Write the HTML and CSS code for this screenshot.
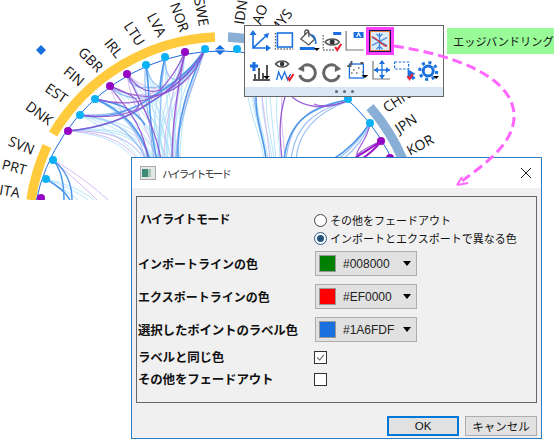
FILE: index.html
```html
<!DOCTYPE html>
<html lang="ja">
<head>
<meta charset="utf-8">
<title>ハイライトモード</title>
<link rel="stylesheet" href="styles.css">
</head>
<body>
<div class="canvas">
  <svg class="chart" width="558" height="200" viewBox="0 0 558 200">
    <g class="arc">
      <path class="arc-yellow" d="M215 37A200 200 0 0 0 53 134"/>
      <path class="arc-yellow" d="M47 146A200 200 0 0 0 31 200"/>
      <path class="arc-steel" d="M228 37A200 200 0 0 1 358 94"/>
      <path class="arc-steel" d="M370 107A200 200 0 0 1 403 160"/>
    </g>
    <circle class="ring" cx="221" cy="240" r="189"/>
    <g class="e1">
      <path d="M68 131C105 130 130 135 143 160"/><path d="M68 131C100 134 122 142 134 160"/>
      <path d="M68 131C108 128 134 132 148 160"/><path d="M68 131C110 126 138 130 153 160"/>
      <path d="M80 115C110 125 135 135 150 160"/><path d="M80 115C108 130 128 142 140 160"/>
      <path d="M80 115C112 122 140 130 155 160"/><path d="M80 115C115 120 145 128 160 160"/>
      <path d="M95 99C118 112 140 130 152 160"/><path d="M95 99C125 115 146 130 158 160"/>
      <path d="M95 99C128 110 150 128 163 160"/><path d="M95 99C132 106 155 128 168 160"/>
      <path d="M110 86C130 104 152 125 160 160"/><path d="M110 86C135 100 158 125 166 160"/>
      <path d="M110 86C140 98 163 125 172 160"/><path d="M127 74C142 100 160 125 165 160"/>
      <path d="M127 74C148 98 166 125 171 160"/><path d="M127 74C152 95 172 125 176 160"/>
      <path d="M146 65C149 95 158 125 160 160"/><path d="M146 65C152 95 165 125 168 160"/>
      <path d="M146 65C156 95 170 125 174 160"/><path d="M146 65C148 95 152 125 152 160"/>
      <path d="M165 57C160 90 158 125 163 160"/><path d="M165 57C165 90 170 125 172 160"/>
      <path d="M165 57C157 90 152 125 156 160"/><path d="M165 57C168 90 175 125 177 160"/>
      <path d="M185 52C172 85 166 125 168 160"/><path d="M185 52C178 85 174 125 175 160"/>
      <path d="M185 52C168 85 158 125 160 160"/><path d="M185 52C182 85 178 125 179 160"/>
      <path d="M205 49C185 80 172 120 173 160"/><path d="M205 49C190 82 180 120 180 160"/>
      <path d="M205 49C180 80 165 120 166 160"/><path d="M205 49C176 82 160 120 158 160"/>
      <path d="M248 97C252 120 262 140 264 160"/><path d="M252 97C255 120 264 140 266 160"/>
      <path d="M256 97C258 120 266 140 268 160"/><path d="M262 97C262 120 270 140 272 160"/>
      <path d="M266 97C266 120 272 140 274 160"/>
      <path d="M270 97C272 120 274 140 276 160"/><path d="M277 97C275 120 280 140 280 160"/>
      <path d="M46 179C60 184 78 192 88 200"/><path d="M46 179C58 186 68 192 78 200"/>
      <path d="M46 179C62 182 82 190 94 200"/>
    </g>
    <g class="e1p">
      <path d="M53 160C70 175 85 188 97 200"/><path d="M53 160C75 172 95 188 108 200"/>
      <path d="M68 131C100 132 124 140 138 160"/><path d="M68 131C103 130 130 136 146 160"/>
      <path d="M110 86C118 115 140 130 145 160"/><path d="M127 74C130 105 150 130 156 160"/>
      <path d="M185 52C180 85 172 125 173 160"/><path d="M185 52C174 85 164 125 164 160"/>
      <path d="M127 74C150 95 172 92 190 78"/><path d="M110 86C140 105 170 90 195 70"/>
      <path d="M205 49C195 85 175 115 176 160"/>
      <path d="M262 97C265 120 268 140 270 160"/><path d="M282 97C280 120 284 140 285 160"/>
      <path d="M330 104C338 106 342 104 347 101"/>
    </g>
    <g class="e2">
      <path d="M80 115C110 118 130 128 147 160"/>
      <path d="M95 99C115 108 135 122 150 160"/>
      <path d="M127 74C128 90 145 88 160 87C175 85 195 70 205 49"/>
      <path d="M110 86C125 102 145 100 165 93C185 85 198 65 205 49"/>
      <path d="M146 65C150 85 160 90 170 87C180 80 182 62 185 52"/>
      <path d="M165 57C165 78 172 82 182 78C195 70 200 60 205 49"/>
      <path d="M205 49C192 90 178 120 176 160"/>
      <path d="M165 57C160 90 160 125 158 160"/>
      <path d="M146 65C142 85 150 125 154 160"/>
      <path d="M80 115C108 116 132 112 155 96C175 84 195 68 205 49"/>
      <path d="M348 100C310 105 290 120 286 160"/><path d="M348 101C315 110 295 125 291 160"/>
      <path d="M348 101C318 112 298 130 296 160"/>
      <path d="M254 97C256 120 264 140 266 160"/>
      <path d="M370 123C362 138 350 150 337 160"/><path d="M370 123C364 140 352 152 342 160"/>
    </g>
    <g class="e3">
      <path d="M68 131C100 128 125 120 150 103C170 90 195 72 205 49"/>
      <path d="M80 115C105 120 130 112 150 98C172 85 192 70 205 49"/>
      <path d="M146 65C150 88 148 125 157 160"/>
      <path d="M165 57C162 70 160 80 160 92"/>
      <path d="M205 49C188 85 176 120 178 160"/>
      <path d="M95 99C118 108 140 125 150 160"/>
      <path d="M95 99C115 102 135 108 145 125"/>
      <path d="M53 160C66 170 72 185 72 200"/><path d="M53 160C62 170 64 188 64 200"/>
      <path d="M46 179C58 186 66 192 70 200"/>
      <path d="M256 97C255 120 265 140 266 160"/>
      <path d="M348 100C305 108 288 125 284 160"/>
      <path d="M370 123C360 138 345 152 332 160"/>
    </g>
    <g class="e4">
      <path d="M68 131C100 128 128 118 150 102C172 90 192 72 205 49"/>
      <path d="M95 99C120 105 140 105 165 92C180 82 182 65 185 52"/>
      <path d="M110 86C135 100 160 100 180 85C198 70 200 60 205 49"/>
      <path d="M110 86C122 105 143 120 148 160"/>
      <path d="M127 74C138 98 155 125 161 160"/>
      <path d="M80 115C100 118 118 118 135 110C145 104 135 95 110 86"/>
      <path d="M185 52C178 68 170 80 160 90C145 95 135 85 127 74"/>
      <path d="M185 52C178 85 172 120 172 160"/>
      <path d="M285 97C278 120 280 140 282 160"/>
      <path d="M292 97C305 108 325 110 347 101"/>
      <path d="M314 104C325 108 335 105 347 101"/>
      <path d="M370 123C368 140 355 150 357 155C362 150 370 146 381 141"/>
    </g>
    <g class="e5">
      <path d="M381 141C372 148 360 154 352 160"/><path d="M381 141C375 150 368 155 360 160"/>
    </g>
    <g class="nodes">
      <circle class="c" cx="205" cy="49" r="4"/><circle class="p" cx="185" cy="52" r="4"/>
      <circle class="c" cx="165" cy="57" r="4"/><circle class="c" cx="146" cy="65" r="4"/>
      <circle class="p" cx="127" cy="74" r="4"/><circle class="p" cx="110" cy="86" r="4"/>
      <circle class="c" cx="95" cy="99" r="4"/><circle class="c" cx="80" cy="115" r="4"/>
      <circle class="p" cx="68" cy="131" r="4"/><circle class="c" cx="53" cy="160" r="4"/>
      <circle class="c" cx="46" cy="179" r="4"/><circle class="p" cx="41" cy="198" r="4"/>
      <circle class="c" cx="237" cy="49" r="4"/><circle class="c" cx="348" cy="99" r="4"/>
      <circle class="c" cx="370" cy="123" r="4"/><circle class="p" cx="381" cy="141" r="4"/>
      <circle class="p" cx="390" cy="158" r="4"/>
      <path class="mark" d="M41 45l5 5-5 5-5-5zM220 45l5 4.500h-10zM220 55l5-4.500h-10z"/>
    </g>
    <g class="labels">
      <text transform="translate(199 27) rotate(80)">SWE</text>
      <text transform="translate(180 33) rotate(70)">NOR</text>
      <text transform="translate(158 38) rotate(62)">LVA</text>
      <text transform="translate(137 47) rotate(57)">LTU</text>
      <text transform="translate(116 59) rotate(51)">IRL</text>
      <text transform="translate(97 73) rotate(45)">GBR</text>
      <text transform="translate(79 87) rotate(40)">FIN</text>
      <text transform="translate(63 104) rotate(35)">EST</text>
      <text transform="translate(48 126) rotate(37)">DNK</text>
      <text transform="translate(32 155) rotate(22)">SVN</text>
      <text transform="translate(25 175) rotate(14)">PRT</text>
      <text transform="translate(19 198) rotate(10)">ITA</text>
      <text class="s" transform="translate(244 25) rotate(-82)">IDN</text>
      <text class="s" transform="translate(258 32) rotate(-68)">LAO</text>
      <text class="s" transform="translate(276 36) rotate(-52)">MYS</text>
      <text class="s" transform="translate(387 113) rotate(-33)">CHN</text>
      <text class="s" transform="translate(399 134) rotate(-33)">JPN</text>
      <text class="s" transform="translate(410 156) rotate(-28)">KOR</text>
    </g>
  </svg>

  <div class="tag">エッジバンドリング</div>

  <div class="toolbar">
    <div class="tool-row tool-row-a">
      <svg class="tool" viewBox="248 26 23.6 29"><path class="ib" d="M253 33V48H268M253 48L267 35"/><path class="ibf" d="M253 30l-3.500 5h7zM271 48l-5-3.500v7zM269 33l-5.500 1.500 4 4z"/></svg>
      <svg class="tool" viewBox="271.600 26 23.600 29"><rect class="ib" x="277" y="33" width="15" height="14"/><path class="idot" d="M275 33V49H293"/></svg>
      <svg class="tool" viewBox="295.200 26 23.600 29"><path class="ig" d="M301 39l7-7 7 7-6 6zM305 35v-3a2 2 0 0 1 4 0v5"/><path class="ib" d="M311 35c4 0 5 3 5 9"/><rect class="ibf" x="300" y="47" width="15" height="3"/><path class="ik" d="M314 48h6l-3 3z"/></svg>
      <svg class="tool" viewBox="318.800 26 23.600 29"><rect class="ibf" x="333" y="32" width="8" height="3"/><path class="idot" d="M323 35V50H335"/><path class="ieye" d="M325 42c3-4 11-4 14 0-3 4-11 4-14 0z"/><circle class="ikc" cx="332" cy="42" r="2.500"/><path class="ir" d="M335 47l2 3 4-6"/></svg>
      <svg class="tool" viewBox="342.400 26 23.600 29"><path class="il" d="M346.500 31V50H364"/><rect class="ibf" x="354" y="32" width="10" height="6"/><path class="iw" d="M357 37l2-4 2 4"/></svg>
      <div class="hl"><div class="hl-in"><svg class="snow" viewBox="0 0 19 19"><path class="sn" d="M9.500 0V19M1 5l17 9M18 5L1 14M6 1l3.500 3L13 1M6 18l3.500-3 3.500 3"/><path class="sr" d="M1 4C8 6 10 13 18 15"/></svg></div></div>
    </div>
    <div class="tool-row">
      <svg class="tool2" viewBox="248 55 24.400 32"><path class="ib2" d="M254 62v9M250 66h8"/><path class="il2" d="M255 80v-6M259 80V68M263 80v-7M267 80V65M253 80h17"/><path class="ik" d="M263 76h7l-3.500 3z"/></svg>
      <svg class="tool2" viewBox="272.400 55 24.400 32"><path class="ieye" d="M276 64c3-4 10-4 13 0-3 4-10 4-13 0z"/><circle class="ikc" cx="282.500" cy="64" r="2.300"/><path class="ib1" d="M277 80l2-8 3 7 3-7 3 8 3-6"/><path class="ir" d="M288 77l2 3 4-6"/></svg>
      <svg class="tool2" viewBox="296.800 55 24.400 32"><path class="iarc" d="M304 65.500A8 8 0 1 1 299.500 75"/><path class="igf" d="M297.500 69l6.500-5v8z"/></svg>
      <svg class="tool2" viewBox="321.200 55 24.400 32"><path class="iarc" d="M335 65.500A8 8 0 1 0 339.500 75"/><path class="igf" d="M341.500 69l-6.500-5v8z"/></svg>
      <svg class="tool2" viewBox="345.600 55 24.400 32"><rect class="ib1" x="349" y="64" width="14" height="14"/><path class="idot2" d="M347 66h4M351 61v4M353 70h1M358 68h1M356 73h1M360 63h3M351 73h1M362 72h1"/><path class="ik" d="M361 75h7l-3.500 3z"/></svg>
      <svg class="tool2" viewBox="370 55 24.400 32"><path class="il" d="M373 61V79H390"/><path class="ib1" d="M382 61V79M374 70H390"/><path class="ibf" d="M382 60l-3 4h6zM382 79l-3-4h6zM374 70l4-3v6zM390 70l-4-3v6z"/></svg>
      <svg class="tool2" viewBox="394.400 55 24.400 32"><rect class="idash" x="395" y="62" width="14" height="7"/><path class="ibf" d="M408 69v10l2.500-2.500L413 80l3-2-3-3 3-1z"/><path class="ir" d="M408 76l2 3 3-5"/></svg>
      <svg class="tool2" viewBox="418.800 55 24.400 32"><circle class="igear" cx="428" cy="71" r="5"/><circle class="igt" cx="428" cy="71" r="8.500"/><path class="ik" d="M433 76h6l-3 3z"/></svg>
    </div>
    <div class="tool-foot"><span class="grip"></span><span class="grip"></span><span class="grip"></span></div>
  </div>

  <div class="dialog">
    <div class="titlebar">
      <svg class="app" viewBox="0 0 16 14"><rect class="app-f" x="0.500" y="0.500" width="15" height="13"/><rect class="app-a" x="2" y="3" width="6" height="8"/><rect class="app-b" x="8" y="3" width="3" height="8"/><rect class="app-c" x="11" y="3" width="3" height="8"/></svg>
      <span class="title">ハイライトモード</span>
      <svg class="close" viewBox="0 0 10 10"><path d="M0 0L10 10M10 0L0 10"/></svg>
    </div>
    <div class="body">
      <div class="group">
        <div class="row row-mode">
          <div class="label label-mode">ハイライトモード</div>
          <div class="radios">
            <div class="radio"><span class="dot"></span>その他をフェードアウト</div>
            <div class="radio"><span class="dot on"></span>インポートとエクスポートで異なる色</div>
          </div>
        </div>
        <div class="row row-first">
          <div class="label">インポートラインの色</div>
          <div class="pick"><span class="sw sw-g"></span><span class="hex">#008000</span><span class="tri"></span></div>
        </div>
        <div class="row">
          <div class="label">エクスポートラインの色</div>
          <div class="pick"><span class="sw sw-r"></span><span class="hex">#EF0000</span><span class="tri"></span></div>
        </div>
        <div class="row">
          <div class="label label-tight">選択したポイントのラベル色</div>
          <div class="pick"><span class="sw sw-b"></span><span class="hex">#1A6FDF</span><span class="tri"></span></div>
        </div>
        <div class="row">
          <div class="label label-tight">ラベルと同じ色</div>
          <span class="cb"><svg viewBox="0 0 13 13"><path d="M2.500 6.500l3 3 5-6"/></svg></span>
        </div>
        <div class="row">
          <div class="label label-tight">その他をフェードアウト</div>
          <span class="cb"></span>
        </div>
      </div>
      <div class="buttons">
        <div class="btn btn-ok">OK</div>
        <div class="btn">キャンセル</div>
      </div>
    </div>
  </div>

  <svg class="curve" width="558" height="200" viewBox="0 0 558 200">
    <path class="curve-line" d="M394 46C450 54 516 76 514 118C513 145 482 166 462 181"/>
    <path class="curve-head" d="M457 185l11-2M457 185l5-8"/>
  </svg>
</div>
</body>
</html>
```
FILE: styles.css
```css
* { box-sizing: border-box; }
html, body { margin: 0; padding: 0; background: #fff; }
body { font-family: "Noto Sans CJK JP", "Liberation Sans", sans-serif; color: #111; }
.canvas { position: relative; width: 558px; height: 439px; overflow: hidden; }
.chart, .curve { position: absolute; left: 0; top: 0; }
.arc path { fill: none; stroke-width: 9.500px; }
.arc-yellow { stroke: #ffcb3d; }
.arc-steel { stroke: #8aafd6; }
.ring { fill: none; stroke: #1a6fdf; stroke-width: 1; }
.e1 path, .e1p path, .e2 path, .e3 path, .e4 path, .e5 path { fill: none; }
.e1 path { stroke: #a9e0fa; stroke-width: 1; opacity: .85; }
.e1p path { stroke: #d2b4f0; stroke-width: 1; opacity: .9; }
.e2 path { stroke: #8fb8f2; stroke-width: 1.200; opacity: .9; }
.e3 path { stroke: #4f97ea; stroke-width: 1.500; }
.e4 path { stroke: #9050d0; stroke-width: 1.300; opacity: .9; }
.e5 path { stroke: #9a10c8; stroke-width: 2; }
.c { fill: #0cb2f6; }
.p { fill: #9406c2; }
.mark { fill: #1a6fdf; }
.labels text { font-family: "Open Sans", "Liberation Sans", sans-serif; font-size: 14px; fill: #111; text-anchor: end; }
.labels text.s { text-anchor: start; }
.tag { position: absolute; left: 447px; top: 28px; width: 107px; height: 26px; background: #98fb98; font-size: 11.200px; line-height: 26px; padding-left: 6px; white-space: nowrap; }
.curve-line { fill: none; stroke: #ff66ff; stroke-width: 3; stroke-dasharray: 10 5; }
.curve-head { fill: none; stroke: #ff66ff; stroke-width: 2; }
.toolbar { position: absolute; left: 244px; top: 25px; width: 200px; height: 72px; background: #fff; border: 1px solid #666; padding-left: 3px; display: flex; flex-direction: column; }
.tool-row { display: flex; height: 32px; }
.tool-row-a { height: 29px; }
.tool { width: 23.600px; height: 29px; overflow: visible; }
.tool2 { width: 24.400px; height: 32px; overflow: visible; flex: none; }
.ib, .ib2, .ib1, .ig, .idot, .idot2, .il, .il2, .ir, .iarc, .idash, .ieye, .iw, .igear, .igt { fill: none; }
.ib { stroke: #1a6fdf; stroke-width: 1.600; }
.ib2 { stroke: #1a6fdf; stroke-width: 3; }
.ib1 { stroke: #1a6fdf; stroke-width: 1.300; }
.ibf { fill: #1a6fdf; }
.ig { stroke: #555; stroke-width: 1.300; }
.idot { stroke: #666; stroke-width: 1.300; stroke-dasharray: 1.500 1.500; }
.idot2 { stroke: #555; stroke-width: 2; }
.ik { fill: #000; }
.ikc { fill: #333; }
.ieye { stroke: #555; stroke-width: 1.600; }
.ir { stroke: #ee2030; stroke-width: 2.200; }
.il { stroke: #777; stroke-width: 1.200; }
.il2 { stroke: #555; stroke-width: 2; }
.iarc { stroke: #666; stroke-width: 3; }
.igf { fill: #666; }
.idash { stroke: #1a6fdf; stroke-width: 1.200; stroke-dasharray: 2.500 1.500; }
.iw { stroke: #fff; stroke-width: 1.200; }
.igear { stroke: #1a6fdf; stroke-width: 3; }
.igt { stroke: #1a6fdf; stroke-width: 3; stroke-dasharray: 3 3.670; }
.hl { width: 28px; height: 28px; margin-top: 1px; border: 3px solid #ff40ff; flex: none; }
.hl-in { width: 22px; height: 22px; border: 1px solid #101060; background: #dcebf8; box-shadow: inset 0 0 0 1px #e8833a; display: flex; align-items: center; justify-content: center; }
.snow { width: 17px; height: 17px; flex: none; }
.sn { fill: none; stroke: #3a86dc; stroke-width: 1.400; }
.sr { fill: none; stroke: #d8343c; stroke-width: 1.500; }
.tool-foot { flex: 1; margin-left: -3px; background: #dbe6f5; display: flex; align-items: center; justify-content: center; gap: 5px; }
.grip { width: 3px; height: 3px; border-radius: 50%; background: #666; }
.dialog { position: absolute; left: 131px; top: 157px; width: 411px; height: 282px; background: #f0f0f0; border: 1px solid #2b7dc4; display: flex; flex-direction: column; }
.titlebar { height: 30px; background: #fff; display: flex; align-items: center; padding: 0 10px 0 8px; flex: none; }
.app { width: 16px; height: 14px; margin-right: 6px; }
.app-f { fill: #e8e8e8; stroke: #aaa; }
.app-a { fill: #3f8a78; }
.app-b { fill: #a8c8b8; }
.app-c { fill: #dfe8e4; }
.title { font-size: 10.500px; letter-spacing: -2px; color: #333; flex: 1; }
.close { width: 10px; height: 10px; }
.close path { fill: none; stroke: #222; stroke-width: 1; }
.body { flex: 1; padding: 8px 4px 0; display: flex; flex-direction: column; }
.group { height: 207px; border: 1px solid #666; padding-left: 1px; }
.row { display: flex; align-items: center; margin-top: 8px; }
.row-mode { margin-top: 15px; align-items: flex-start; }
.row-first { margin-top: 5px; }
.label { width: 176px; flex: none; font-size: 12px; line-height: 14px; font-weight: 700; white-space: nowrap; padding-left: 0; }
.label-mode { padding-left: 2px; line-height: 14px; letter-spacing: -.75px; }
.label-tight { font-size: 12.500px; letter-spacing: -.2px; }
.radios { display: flex; flex-direction: column; gap: 2px; }
.radio { height: 16px; display: flex; align-items: center; font-size: 11px; white-space: nowrap; }
.dot { width: 13px; height: 13px; border: 1px solid #444; border-radius: 50%; background: #fff; margin-right: 3px; display: flex; align-items: center; justify-content: center; }
.dot.on { border-color: #2a5a8a; }
.dot.on::before { content: ""; width: 7px; height: 7px; border-radius: 50%; background: #24527f; }
.pick { width: 102px; height: 25px; margin-left: 1px; background: #e1e1e1; border: 1px solid #adadad; display: flex; align-items: center; padding-left: 3px; }
.sw { width: 17px; height: 17px; border: 1px solid #999; }
.sw-g { background: #008000; }
.sw-r { background: #f00; }
.sw-b { background: #1a6fdf; }
.hex { font-family: "Liberation Sans", sans-serif; font-size: 12px; margin-left: 7px; flex: 1; color: #222; }
.tri { width: 0; height: 0; border-left: 4.500px solid transparent; border-right: 4.500px solid transparent; border-top: 5px solid #000; margin-right: 5px; }
.cb { width: 13px; height: 13px; border: 1px solid #333; background: #fff; display: block; flex: none; }
.cb svg { display: block; width: 11px; height: 11px; }
.cb path { fill: none; stroke: #666; stroke-width: 1.300; }
.buttons { display: flex; justify-content: flex-end; gap: 6px; margin-top: 13px; }
.btn { width: 72px; height: 20px; background: #e1e1e1; border: 1px solid #adadad; font-size: 11.500px; line-height: 18px; text-align: center; }
.btn-ok { border: 2px solid #0078d7; line-height: 16px; font-family: "Liberation Sans", sans-serif; }
```
